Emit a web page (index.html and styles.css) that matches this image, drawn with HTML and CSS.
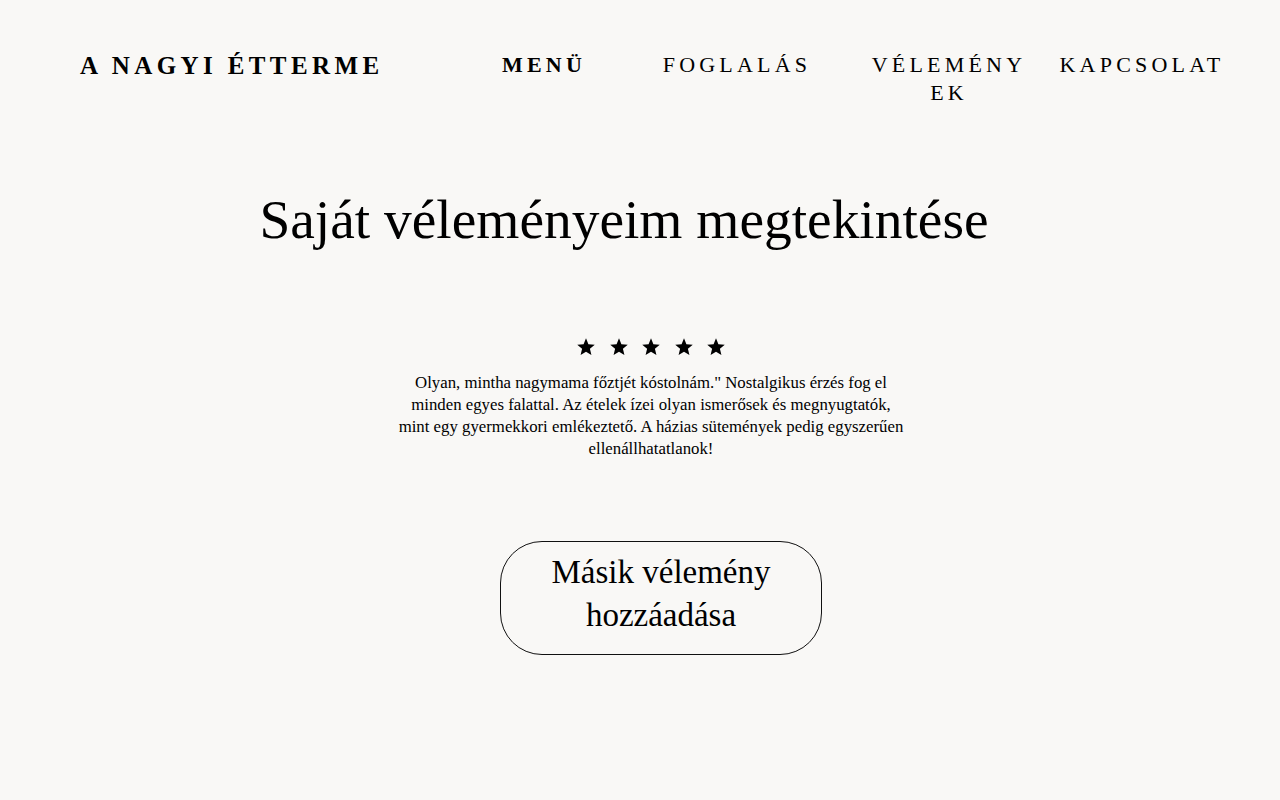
FILE: index.html
```html
<!DOCTYPE html>
<html lang="hu">
<head>
<meta charset="utf-8">
<title>A Nagyi Étterme – Véleményeim</title>
<link rel="stylesheet" href="styles.css">
</head>
<body>
<header class="site-header">
  <div class="logo">A NAGYI ÉTTERME</div>
  <nav class="nav">
    <a class="nav-item nav-bold" href="#">MENÜ</a>
    <a class="nav-item" href="#">FOGLALÁS</a>
    <a class="nav-item nav-wrap" href="#">VÉLEMÉNYEK</a>
    <a class="nav-item" href="#">KAPCSOLAT</a>
  </nav>
</header>
<main class="content">
  <h1 class="title">Saját véleményeim megtekintése</h1>
  <section class="review">
    <div class="stars">
      <svg class="star" viewBox="0 0 24 24"><polygon points="12,1.5 14.9,8.6 22.5,9.2 16.7,14.1 18.5,21.6 12,17.6 5.5,21.6 7.3,14.1 1.5,9.2 9.1,8.6"/></svg>
      <svg class="star" viewBox="0 0 24 24"><polygon points="12,1.5 14.9,8.6 22.5,9.2 16.7,14.1 18.5,21.6 12,17.6 5.5,21.6 7.3,14.1 1.5,9.2 9.1,8.6"/></svg>
      <svg class="star" viewBox="0 0 24 24"><polygon points="12,1.5 14.9,8.6 22.5,9.2 16.7,14.1 18.5,21.6 12,17.6 5.5,21.6 7.3,14.1 1.5,9.2 9.1,8.6"/></svg>
      <svg class="star" viewBox="0 0 24 24"><polygon points="12,1.5 14.9,8.6 22.5,9.2 16.7,14.1 18.5,21.6 12,17.6 5.5,21.6 7.3,14.1 1.5,9.2 9.1,8.6"/></svg>
      <svg class="star" viewBox="0 0 24 24"><polygon points="12,1.5 14.9,8.6 22.5,9.2 16.7,14.1 18.5,21.6 12,17.6 5.5,21.6 7.3,14.1 1.5,9.2 9.1,8.6"/></svg>
    </div>
    <p class="review-text">Olyan, mintha nagymama főztjét kóstolnám." Nostalgikus érzés fog el minden egyes falattal. Az ételek ízei olyan ismerősek és megnyugtatók, mint egy gyermekkori emlékeztető. A házias sütemények pedig egyszerűen ellenállhatatlanok!</p>
  </section>
  <a class="add-button" href="#">Másik vélemény hozzáadása</a>
</main>
</body>
</html>
```

FILE: styles.css
```css
* { box-sizing: border-box; }

html, body {
  margin: 0;
  padding: 0;
  background: #f9f8f6;
  color: #000;
  font-family: "Liberation Serif", "Times New Roman", serif;
}

body { min-height: 800px; }

.site-header {
  display: flex;
  align-items: flex-start;
  padding: 52px 0 0 80px;
}

.logo {
  font-size: 25px;
  font-weight: bold;
  letter-spacing: 4.4px;
  line-height: 30px;
  margin-top: -1px;
  white-space: nowrap;
}

.nav {
  margin-left: auto;
  display: grid;
  grid-template-columns: 192px 194px 230px 156px;
  margin-right: 60px;
  margin-top: -1px;
}

.nav-item {
  justify-self: center;
  text-align: center;
  font-size: 22px;
  line-height: 28px;
  letter-spacing: 4.2px;
  color: #000;
  text-decoration: none;
  white-space: nowrap;
}

.nav-bold { font-weight: bold; }

.nav-wrap {
  white-space: normal;
  width: 162px;
  word-break: break-all;
}

.content {
  display: flex;
  flex-direction: column;
  align-items: center;
}

.title {
  margin: 79px 32px 0 0;
  font-size: 55.4px;
  font-weight: normal;
  line-height: 67px;
}

.review {
  margin: 84px 0 0 22px;
  display: flex;
  flex-direction: column;
  align-items: center;
}

.stars {
  display: flex;
  gap: 12.5px;
}

.star {
  width: 20px;
  height: 20px;
  fill: #000;
  display: block;
}

.review-text {
  width: 508px;
  margin: 15px 0 0;
  font-size: 16.8px;
  line-height: 22px;
  text-align: center;
}

.add-button {
  margin: 81px 0 0 42px;
  width: 322px;
  height: 114px;
  padding: 9px 20px;
  border: 1px solid #111;
  border-radius: 42px;
  font-size: 33px;
  line-height: 43px;
  text-align: center;
  color: #000;
  text-decoration: none;
}
```
